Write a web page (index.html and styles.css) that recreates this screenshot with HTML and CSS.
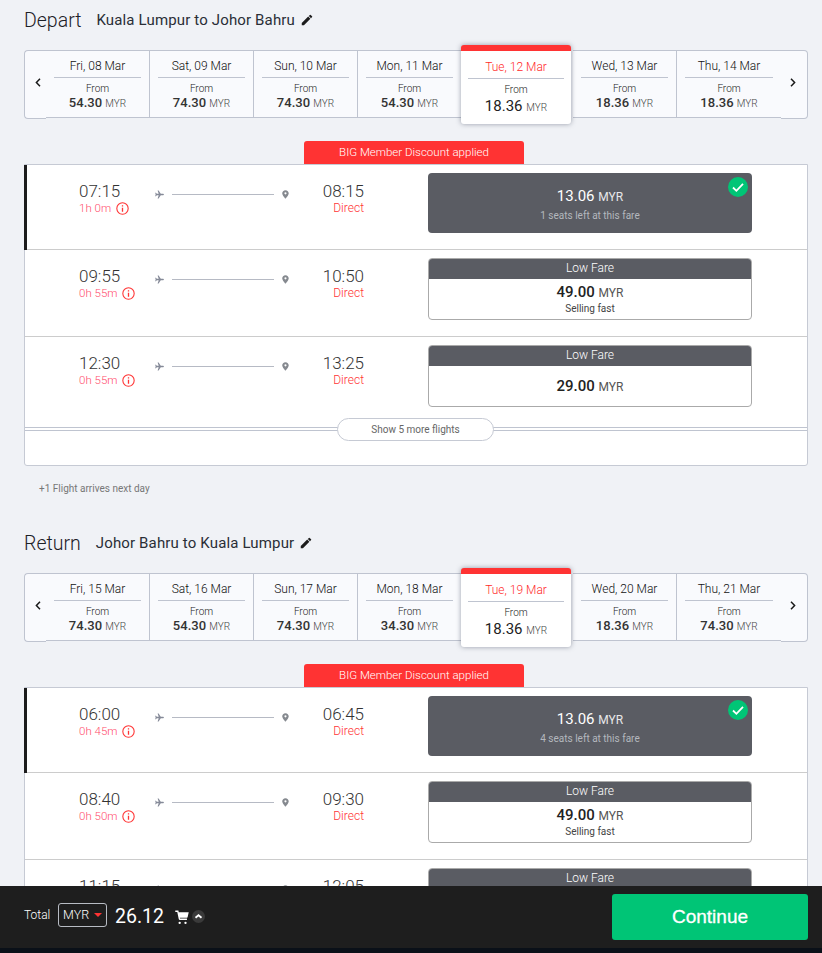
FILE: index.html
```html
<!DOCTYPE html>
<html lang="en">
<head>
  <meta charset="UTF-8" />
  <title>Select flights</title>
  <link rel="stylesheet" href="styles.css">
</head>
<body>

  <svg class="icon-defs" width="0" height="0">
    <symbol id="i-pencil" viewBox="0 0 24 24"><path d="M3 17.250V21h3.750L17.810 9.940l-3.750-3.750L3 17.250zM20.710 7.040a1 1 0 0 0 0-1.410l-2.340-2.340a1 1 0 0 0-1.410 0l-1.830 1.830 3.750 3.750 1.830-1.830z"/></symbol>
    <symbol id="i-plane" viewBox="0 0 24 24"><path d="M24 12c0-1.200-1-2-2.200-2h-6.300L9.800 1H7l3 9H4.800L2.600 7H.5l1.300 5-1.300 5h2.100l2.200-3H10l-3 9h2.800l5.700-9h6.300c1.200 0 2.200-.8 2.200-2z"/></symbol>
    <symbol id="i-pin" viewBox="0 0 16 20"><path fill-rule="evenodd" d="M8 0C3.600 0 .5 3.200.5 7.300.5 12 8 20 8 20s7.500-8 7.500-12.700C15.500 3.200 12.400 0 8 0zm0 9.800a2.500 2.500 0 1 1 0-5 2.500 2.500 0 0 1 0 5z"/></symbol>
    <symbol id="i-info" viewBox="0 0 24 24"><circle cx="12" cy="12" r="10.500" fill="none" stroke="currentColor" stroke-width="2"/><path d="M10.800 10.500h2.400V18h-2.400zM10.800 6h2.400v2.400h-2.400z" fill="currentColor"/></symbol>
    <symbol id="i-cart" viewBox="0 0 24 24"><path d="M8 20a2 2 0 1 0 0 4 2 2 0 0 0 0-4zm10 0a2 2 0 1 0 0 4 2 2 0 0 0 0-4zM23.500 4H6.400L5.800 1H.5v2.400h3.400l2.500 12.100c.2.900 1 1.500 1.900 1.500h12.200v-2.400H8.600l-.3-1.400h12.200c.6 0 1.100-.4 1.200-1z"/></symbol>
    <symbol id="i-prev" viewBox="0 0 6 9"><path d="M5 .8L1.400 4.500 5 8.200" fill="none" stroke="currentColor" stroke-width="1.500"/></symbol>
    <symbol id="i-next" viewBox="0 0 6 9"><path d="M1 .8l3.600 3.700L1 8.200" fill="none" stroke="currentColor" stroke-width="1.500"/></symbol>
  </svg>

  <section class="trip">
    <div class="trip-head">
      <h2>Depart</h2>
      <span class="trip-route">Kuala Lumpur to Johor Bahru</span>
      <svg class="pencil"><use href="#i-pencil"/></svg>
    </div>

    <div class="dates">
      <div class="date-arrow"><svg><use href="#i-prev"/></svg></div>
      <div class="date"><div class="date-day">Fri, 08 Mar</div><div class="date-from">From</div><div class="date-price">54.30 <small>MYR</small></div></div>
      <div class="date"><div class="date-day">Sat, 09 Mar</div><div class="date-from">From</div><div class="date-price">74.30 <small>MYR</small></div></div>
      <div class="date"><div class="date-day">Sun, 10 Mar</div><div class="date-from">From</div><div class="date-price">74.30 <small>MYR</small></div></div>
      <div class="date"><div class="date-day">Mon, 11 Mar</div><div class="date-from">From</div><div class="date-price">54.30 <small>MYR</small></div></div>
      <div class="date active"><div class="date-day">Tue, 12 Mar</div><div class="date-from">From</div><div class="date-price">18.36 <small>MYR</small></div></div>
      <div class="date"><div class="date-day">Wed, 13 Mar</div><div class="date-from">From</div><div class="date-price">18.36 <small>MYR</small></div></div>
      <div class="date last"><div class="date-day">Thu, 14 Mar</div><div class="date-from">From</div><div class="date-price">18.36 <small>MYR</small></div></div>
      <div class="date-arrow date-arrow-next"><svg><use href="#i-next"/></svg></div>
    </div>

    <div class="promo">BIG Member Discount applied</div>

    <div class="flights">
      <div class="flight selected">
        <div class="dep"><div class="time">07:15</div><div class="dur">1h 0m <svg class="info"><use href="#i-info"/></svg></div></div>
        <div class="route"><svg class="plane"><use href="#i-plane"/></svg><span class="route-line"></span><svg class="pin"><use href="#i-pin"/></svg></div>
        <div class="arr"><div class="time">08:15</div><div class="stops">Direct</div></div>
        <div class="fare fare-picked">
          <div class="fare-price">13.06 <small>MYR</small></div>
          <div class="fare-note">1 seats left at this fare</div>
          <span class="tick"><svg viewBox="0 0 20 20"><path d="M5 10.500l3.400 3.300L15 6.800" fill="none" stroke="#fff" stroke-width="1.800"/></svg></span>
        </div>
      </div>
      <div class="flight">
        <div class="dep"><div class="time">09:55</div><div class="dur">0h 55m <svg class="info"><use href="#i-info"/></svg></div></div>
        <div class="route"><svg class="plane"><use href="#i-plane"/></svg><span class="route-line"></span><svg class="pin"><use href="#i-pin"/></svg></div>
        <div class="arr"><div class="time">10:50</div><div class="stops">Direct</div></div>
        <div class="fare">
          <div class="fare-title">Low Fare</div>
          <div class="fare-body"><div class="fare-price">49.00 <small>MYR</small></div><div class="fare-note">Selling fast</div></div>
        </div>
      </div>
      <div class="flight flight-last">
        <div class="dep"><div class="time">12:30</div><div class="dur">0h 55m <svg class="info"><use href="#i-info"/></svg></div></div>
        <div class="route"><svg class="plane"><use href="#i-plane"/></svg><span class="route-line"></span><svg class="pin"><use href="#i-pin"/></svg></div>
        <div class="arr"><div class="time">13:25</div><div class="stops">Direct</div></div>
        <div class="fare">
          <div class="fare-title">Low Fare</div>
          <div class="fare-body"><div class="fare-price">29.00 <small>MYR</small></div></div>
        </div>
      </div>
      <div class="more"><span class="more-btn">Show 5 more flights</span></div>
    </div>

    <p class="next-day">+1 Flight arrives next day</p>
  </section>

  <section class="trip">
    <div class="trip-head">
      <h2>Return</h2>
      <span class="trip-route">Johor Bahru to Kuala Lumpur</span>
      <svg class="pencil"><use href="#i-pencil"/></svg>
    </div>

    <div class="dates">
      <div class="date-arrow"><svg><use href="#i-prev"/></svg></div>
      <div class="date"><div class="date-day">Fri, 15 Mar</div><div class="date-from">From</div><div class="date-price">74.30 <small>MYR</small></div></div>
      <div class="date"><div class="date-day">Sat, 16 Mar</div><div class="date-from">From</div><div class="date-price">54.30 <small>MYR</small></div></div>
      <div class="date"><div class="date-day">Sun, 17 Mar</div><div class="date-from">From</div><div class="date-price">74.30 <small>MYR</small></div></div>
      <div class="date"><div class="date-day">Mon, 18 Mar</div><div class="date-from">From</div><div class="date-price">34.30 <small>MYR</small></div></div>
      <div class="date active"><div class="date-day">Tue, 19 Mar</div><div class="date-from">From</div><div class="date-price">18.36 <small>MYR</small></div></div>
      <div class="date"><div class="date-day">Wed, 20 Mar</div><div class="date-from">From</div><div class="date-price">18.36 <small>MYR</small></div></div>
      <div class="date last"><div class="date-day">Thu, 21 Mar</div><div class="date-from">From</div><div class="date-price">74.30 <small>MYR</small></div></div>
      <div class="date-arrow date-arrow-next"><svg><use href="#i-next"/></svg></div>
    </div>

    <div class="promo">BIG Member Discount applied</div>

    <div class="flights">
      <div class="flight selected">
        <div class="dep"><div class="time">06:00</div><div class="dur">0h 45m <svg class="info"><use href="#i-info"/></svg></div></div>
        <div class="route"><svg class="plane"><use href="#i-plane"/></svg><span class="route-line"></span><svg class="pin"><use href="#i-pin"/></svg></div>
        <div class="arr"><div class="time">06:45</div><div class="stops">Direct</div></div>
        <div class="fare fare-picked">
          <div class="fare-price">13.06 <small>MYR</small></div>
          <div class="fare-note">4 seats left at this fare</div>
          <span class="tick"><svg viewBox="0 0 20 20"><path d="M5 10.500l3.400 3.300L15 6.800" fill="none" stroke="#fff" stroke-width="1.800"/></svg></span>
        </div>
      </div>
      <div class="flight">
        <div class="dep"><div class="time">08:40</div><div class="dur">0h 50m <svg class="info"><use href="#i-info"/></svg></div></div>
        <div class="route"><svg class="plane"><use href="#i-plane"/></svg><span class="route-line"></span><svg class="pin"><use href="#i-pin"/></svg></div>
        <div class="arr"><div class="time">09:30</div><div class="stops">Direct</div></div>
        <div class="fare">
          <div class="fare-title">Low Fare</div>
          <div class="fare-body"><div class="fare-price">49.00 <small>MYR</small></div><div class="fare-note">Selling fast</div></div>
        </div>
      </div>
      <div class="flight flight-last">
        <div class="dep"><div class="time">11:15</div></div>
        <div class="route"><svg class="plane"><use href="#i-plane"/></svg><span class="route-line"></span><svg class="pin"><use href="#i-pin"/></svg></div>
        <div class="arr"><div class="time">12:05</div></div>
        <div class="fare">
          <div class="fare-title">Low Fare</div>
        </div>
      </div>
    </div>
  </section>

  <footer class="summary">
    <div class="total">
      <span class="total-label">Total</span>
      <span class="currency">MYR <i class="caret"></i></span>
      <span class="total-price">26.12</span>
      <svg class="cart"><use href="#i-cart"/></svg>
      <span class="expand"><svg viewBox="0 0 13 13"><path d="M3.500 7.800l3-2.600 3 2.600" fill="none" stroke="#fff" stroke-width="1.800"/></svg></span>
    </div>
    <button class="continue" type="button">Continue</button>
  </footer>

</body>
</html>
```

FILE: styles.css
```css
html, body {
  height: 953px;
  overflow: hidden;
}

body {
  margin: 0;
  padding: 0 14px 0 24px;
  background: #f0f2f6;
  font-family: Roboto, sans-serif;
  color: #222;
}

.icon-defs {
  position: absolute;
}

.trip-head {
  display: flex;
  align-items: center;
  height: 24px;
  padding-top: 8px;
}

.trip-head h2 {
  margin: 0 15px 0 0;
  font-size: 19.500px;
  font-weight: 300;
  color: #1c2026;
}

.trip-route {
  font-size: 15px;
  letter-spacing: 0.15px;
  color: #2a2e36;
}

.pencil {
  width: 14px;
  height: 14px;
  margin-left: 5px;
  fill: #1c1c1c;
}

/* date strip */
.dates {
  display: flex;
  align-items: flex-start;
  height: 69px;
  margin-top: 18px;
}

.date-arrow {
  width: 22px;
  height: 69px;
  flex: none;
  box-sizing: border-box;
  padding: 27px 0 0 10px;
  background: #f9fafd;
  border: 1px solid #bfc4d0;
  border-right: none;
  border-radius: 4px 0 0 4px;
  color: #1a1a1a;
}

.date-arrow svg {
  display: block;
  width: 6px;
  height: 9px;
}

.date-arrow-next {
  flex: 1;
  padding-left: 9px;
  border: 1px solid #bfc4d0;
  border-left: none;
  border-radius: 0 4px 4px 0;
}

.date {
  width: 104px;
  height: 68px;
  flex: none;
  box-sizing: border-box;
  padding: 0 8px;
  background: #f9fafd;
  border: 1px solid #bfc4d0;
  border-width: 1px 1px 1px 0;
  text-align: center;
}

.date.last {
  border-right: none;
}

.date-day {
  height: 26px;
  line-height: 30px;
  font-size: 12px;
  font-weight: 300;
  color: #111;
  border-bottom: 1px solid #bfc4d0;
}

.date-from {
  margin-top: 4px;
  font-size: 10px;
  line-height: 13px;
  font-weight: 300;
  color: #222;
}

.date-price {
  font-size: 13px;
  line-height: 16px;
  font-weight: 500;
  color: #333;
}

.date-price small {
  font-size: 10px;
  font-weight: 300;
  color: #444;
}

.date.active {
  position: relative;
  width: 110px;
  height: 79px;
  margin: -5px 2px 0 -1px;
  background: #fff;
  border: none;
  border-top: 6px solid #ff3333;
  border-radius: 3px;
  box-shadow: 0 0 5px rgba(60, 70, 90, 0.5);
  padding: 0 7px;
}

.date.active .date-day {
  color: #ff2a2a;
  height: 27px;
  line-height: 32px;
}

.date.active .date-from {
  margin-top: 4px;
}

.date.active .date-price {
  font-size: 15px;
  line-height: 21px;
  font-weight: 400;
  color: #222;
}

.promo {
  width: 220px;
  height: 23px;
  margin: 22px auto 0;
  position: relative;
  left: -2px;
  background: #ff3333;
  border-radius: 3px 3px 0 0;
  color: #fff;
  font-size: 11.500px;
  font-weight: 300;
  line-height: 23px;
  text-align: center;
}

/* flight list */
.flights {
  background: #fff;
  border: 1px solid #c6cad4;
  border-radius: 0 0 3px 3px;
}

.flight {
  display: flex;
  height: 76px;
  padding: 8px 0 0 54px;
  border-bottom: 1px solid #ccc;
  position: relative;
}

.flight + .flight {
  height: 78px;
}

.flight.selected::before {
  content: "";
  position: absolute;
  left: -1px;
  top: 0;
  bottom: -1px;
  width: 3px;
  background: #1c1c1c;
}

.flight.flight-last {
  height: 75px;
  border-bottom: none;
}

.dep {
  width: 76px;
  padding-top: 8px;
}

.time {
  font-size: 17px;
  line-height: 20px;
  font-weight: 300;
  color: #333;
}

.dur {
  display: flex;
  align-items: center;
  gap: 5px;
  font-size: 11.500px;
  line-height: 14px;
  font-weight: 300;
  color: #ff4d6d;
}

.info {
  width: 13px;
  height: 13px;
  color: #ff3333;
}

.route {
  display: flex;
  align-items: center;
  width: 134px;
  height: 26px;
  padding-top: 8px;
}

.plane {
  width: 9px;
  height: 9px;
  fill: #858a98;
}

.route-line {
  width: 103px;
  height: 1px;
  margin: 0 8px;
  background: #b6bac4;
}

.pin {
  width: 7px;
  height: 9px;
  fill: #85898f;
}

.arr {
  width: 75px;
  padding-top: 8px;
  text-align: right;
}

.stops {
  font-size: 12px;
  line-height: 14px;
  font-weight: 300;
  color: #ff3333;
}

/* fare boxes */
.fare {
  width: 324px;
  height: 62px;
  margin-left: 64px;
  box-sizing: border-box;
  border: 1px solid #aaa;
  border-radius: 4px;
  background: #fff;
  overflow: hidden;
  text-align: center;
}

.fare-title {
  height: 21px;
  margin: -1px -1px 0;
  background: #5a5c63;
  color: #fff;
  font-size: 12px;
  font-weight: 300;
  line-height: 21px;
}

.fare-body {
  display: flex;
  flex-direction: column;
  justify-content: center;
  height: 40px;
}

.fare-price {
  font-size: 15px;
  line-height: 18px;
  font-weight: 500;
  color: #222;
}

.fare-price small {
  font-size: 12px;
  font-weight: 400;
  color: #555;
}

.fare-note {
  font-size: 10px;
  line-height: 13px;
  color: #444;
}

.fare-picked {
  position: relative;
  height: 60px;
  padding-top: 14px;
  background: #5a5c63;
  border: none;
  overflow: visible;
}

.fare-picked .fare-price {
  color: #fff;
  font-weight: 400;
}

.fare-picked .fare-price small {
  color: #e8e8ea;
}

.fare-picked .fare-note {
  margin-top: 3px;
  color: #b4b8be;
}

.tick {
  position: absolute;
  top: 4px;
  right: 4px;
  width: 20px;
  height: 20px;
  border-radius: 50%;
  background: #00c576;
}

.tick svg {
  display: block;
}

.more {
  position: relative;
  height: 47px;
  margin-top: -2px;
  background: linear-gradient(#bfc4d0, #bfc4d0) 0 9px / 100% 1px no-repeat,
              linear-gradient(#bfc4d0, #bfc4d0) 0 12px / 100% 1px no-repeat;
}

.more-btn {
  position: absolute;
  left: 312px;
  top: 0;
  width: 157px;
  height: 23px;
  box-sizing: border-box;
  background: #fff;
  border: 1px solid #c6cad4;
  border-radius: 12px;
  font-size: 10px;
  line-height: 21px;
  text-align: center;
  color: #666;
}

.next-day {
  margin: 17px 0 0 15px;
  height: 40px;
  font-size: 10px;
  line-height: 12px;
  color: #777;
}

/* bottom bar */
.summary {
  position: fixed;
  left: 0;
  right: 0;
  bottom: 0;
  display: flex;
  justify-content: space-between;
  align-items: center;
  height: 62px;
  padding: 0 14px 0 24px;
  background: #1e1e1e;
  border-bottom: 5px solid #0a1018;
}

.total {
  display: flex;
  align-items: center;
  margin-bottom: 5px;
  color: #fff;
}

.total-label {
  width: 34px;
  font-size: 12px;
  font-weight: 300;
}

.currency {
  display: flex;
  align-items: center;
  width: 43px;
  height: 22px;
  padding-left: 4px;
  border: 1px solid #b8bcc4;
  border-radius: 3px;
  font-size: 12.500px;
  font-weight: 300;
  margin-right: 8px;
}

.caret {
  width: 0;
  height: 0;
  margin-left: 5px;
  border: 4px solid transparent;
  border-top: 4px solid #ff3333;
  border-bottom: none;
}

.total-price {
  margin-top: 4px;
  margin-right: 11px;
  font-size: 19.500px;
}

.cart {
  width: 14px;
  height: 14px;
  margin-top: 4px;
  fill: #fff;
}

.expand {
  width: 13px;
  height: 13px;
  margin: 4px 0 0 3px;
  border-radius: 50%;
  background: #3a3a3a;
}

.expand svg {
  display: block;
}

.continue {
  width: 196px;
  height: 46px;
  background: #00c576;
  border: none;
  border-radius: 3px;
  color: #fff;
  font-family: "Liberation Sans", Arial, sans-serif;
  font-size: 19px;
  -webkit-text-stroke: 0.3px #fff;
}
```
